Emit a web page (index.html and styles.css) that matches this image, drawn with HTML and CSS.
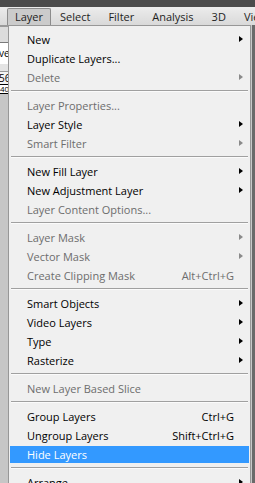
FILE: index.html
```html
<!DOCTYPE html>
<html lang="en">
  <head>
    <meta charset="UTF-8" />
    <title>Layer menu</title>
    <link rel="stylesheet" href="styles.css">
  </head>
  <body>
    <div class="topstrip"></div>

    <div class="menubar">
      <span class="mb-item active">Layer</span>
      <span class="mb-item">Select</span>
      <span class="mb-item">Filter</span>
      <span class="mb-item">Analysis</span>
      <span class="mb-item">3D</span>
      <span class="mb-item">View</span>
    </div>

    <div class="workspace">
      <div class="leftpane">
        <div class="lp-top"></div>
        <div class="lp-field">ve</div>
        <div class="lp-gap"></div>
        <div class="lp-num">56</div>
        <div class="lp-ruler">40</div>
      </div>

      <div class="menu">
        <div class="item"><span class="label">New</span><span class="sub"></span></div>
        <div class="item"><span class="label">Duplicate Layers...</span><span class="sub none"></span></div>
        <div class="item off"><span class="label">Delete</span><span class="sub"></span></div>
        <div class="sep"></div>
        <div class="item off"><span class="label">Layer Properties...</span><span class="sub none"></span></div>
        <div class="item"><span class="label">Layer Style</span><span class="sub"></span></div>
        <div class="item off"><span class="label">Smart Filter</span><span class="sub"></span></div>
        <div class="sep"></div>
        <div class="item"><span class="label">New Fill Layer</span><span class="sub"></span></div>
        <div class="item"><span class="label">New Adjustment Layer</span><span class="sub"></span></div>
        <div class="item off"><span class="label">Layer Content Options...</span><span class="sub none"></span></div>
        <div class="sep"></div>
        <div class="item off"><span class="label">Layer Mask</span><span class="sub"></span></div>
        <div class="item off"><span class="label">Vector Mask</span><span class="sub"></span></div>
        <div class="item off"><span class="label">Create Clipping Mask</span><span class="key">Alt+Ctrl+G</span><span class="sub none"></span></div>
        <div class="sep"></div>
        <div class="item"><span class="label">Smart Objects</span><span class="sub"></span></div>
        <div class="item"><span class="label">Video Layers</span><span class="sub"></span></div>
        <div class="item"><span class="label">Type</span><span class="sub"></span></div>
        <div class="item"><span class="label">Rasterize</span><span class="sub"></span></div>
        <div class="sep"></div>
        <div class="item off"><span class="label">New Layer Based Slice</span><span class="sub none"></span></div>
        <div class="sep"></div>
        <div class="item"><span class="label">Group Layers</span><span class="key">Ctrl+G</span><span class="sub none"></span></div>
        <div class="item"><span class="label">Ungroup Layers</span><span class="key">Shift+Ctrl+G</span><span class="sub none"></span></div>
        <div class="item hot"><span class="label">Hide Layers</span><span class="sub none"></span></div>
        <div class="sep"></div>
        <div class="item"><span class="label">Arrange</span><span class="sub"></span></div>
      </div>

      <div class="rightpane"></div>
    </div>
  </body>
</html>
```

FILE: styles.css
```css
html,
body {
  margin: 0;
  height: 483px;
  overflow: hidden;
}
body {
  font-family: "Open Sans", "Liberation Sans", sans-serif;
  font-size: 11px;
  color: #000;
  background: #c4c4c4;
}

.topstrip {
  height: 7px;
  background: #4b4b4b;
}

.menubar {
  height: 18px;
  display: flex;
  align-items: flex-end;
  padding-left: 7px;
  background: linear-gradient(#ececec, #d9d9d9);
  white-space: nowrap;
  overflow: hidden;
}
.mb-item {
  height: 17px;
  line-height: 16px;
  padding: 0 8px;
  font-size: 11px;
  color: #1e1e1e;
  box-sizing: border-box;
  border: 1px solid transparent;
  border-bottom: none;
}
.mb-item.active {
  padding: 0 7px;
  background: #cbcbcb;
  border-color: #8c8c8c;
  border-radius: 2px 2px 0 0;
}

.workspace {
  display: flex;
  height: 458px;
}

.leftpane {
  width: 8px;
  background: #c6c6c6;
  overflow: hidden;
  font-size: 10px;
  line-height: 12px;
  white-space: nowrap;
}
.lp-top {
  height: 15px;
  background: #dcdcdc;
  border-top: 2px solid #9a9a9a;
}
.lp-field {
  height: 21px;
  line-height: 21px;
  background: #fff;
  border-top: 1px solid #7a7a7a;
  margin-left: -1px;
}
.lp-gap {
  height: 7px;
  background: #e4e4e4;
}
.lp-num {
  height: 12px;
  line-height: 12px;
  background: #f4f4f4;
  border-top: 1px solid #9a9a9a;
  border-bottom: 1px solid #000;
  margin-left: -1px;
  overflow: hidden;
}
.lp-ruler {
  height: 8px;
  line-height: 8px;
  background: #fff;
  border-bottom: 1px solid #000;
  font-size: 8px;
  overflow: hidden;
}

.menu {
  width: 243px;
  height: 100%;
  box-sizing: border-box;
  background: #f0f0f0;
  border: 1px solid #979797;
  border-bottom: none;
  padding: 4px 1px 0;
  overflow: hidden;
}

.item {
  height: 19px;
  display: flex;
  align-items: center;
  padding-left: 17px;
  box-sizing: border-box;
  white-space: nowrap;
}
.item .label {
  flex: 1;
}
.item .key {
  text-align: right;
}
.item .sub {
  width: 15px;
  height: 7px;
  position: relative;
}
.item .sub::after {
  content: "";
  position: absolute;
  left: 5px;
  top: 0;
  border-left: 4px solid #000;
  border-top: 3.5px solid transparent;
  border-bottom: 3.5px solid transparent;
}
.item .sub.none::after {
  display: none;
}
.item.off {
  color: #6d6d6d;
}
.item.off .sub::after {
  border-left-color: #8a8a8a;
}
.item.hot {
  background: #3399ff;
  color: #fff;
  box-shadow: inset 0 1px 0 #f0f0f0, inset 0 -1px 0 #f0f0f0;
}

.sep {
  height: 9px;
  box-sizing: border-box;
  padding: 3px 1px 0;
}
.sep::before {
  content: "";
  display: block;
  height: 1px;
  background: #a0a0a0;
  border-bottom: 1px solid #fbfbfb;
}

.rightpane {
  width: 3px;
  background: #6a6a6a;
  border-left: 1px solid #c8c8c8;
}
```
